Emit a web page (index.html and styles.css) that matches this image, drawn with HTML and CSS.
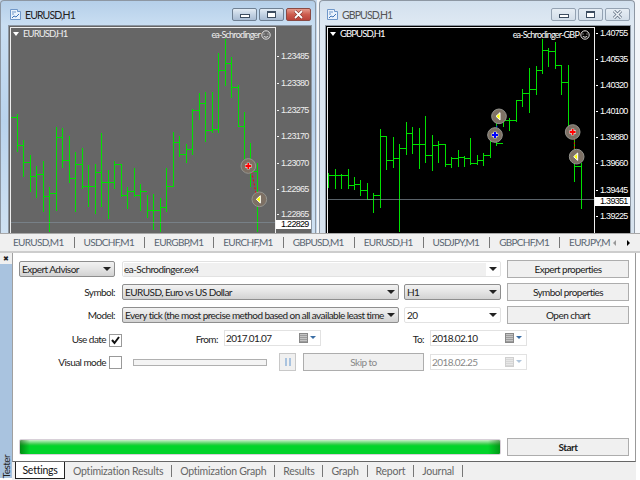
FILE: index.html
```html
<!DOCTYPE html>
<html lang="en">
<head>
    <meta charset="UTF-8">
    <title>Strategy Tester</title>
    <link rel="stylesheet" href="styles.css">
</head>
<body>
    <div class="desktop">
        <div class="charts">
            <!-- EURUSD window -->
            <div class="window window-left">
                <div class="titlebar">
                    <svg class="win-icon" width="13" height="13" viewBox="0 0 13 13"><path d="M1.5 1.5h7v2h3v8h-10z" fill="#e9f2fc" stroke="#6f97c9"/><path d="M3 4h4M3 6h2" stroke="#6f97c9"/><path d="M3 10l2-2 2 1 3-3" fill="none" stroke="#3f74b8"/></svg>
                    <span class="win-title">EURUSD,H1</span>
                    <div class="win-buttons">
                        <span class="win-btn"><i class="glyph-min"></i></span>
                        <span class="win-btn"><i class="glyph-max"></i></span>
                        <span class="win-btn btn-close">
                            <svg width="11" height="9" viewBox="0 0 11 9"><path d="M2 1l7 7M9 1l-7 7" stroke="#7a2c26" stroke-width="3"/><path d="M2 1l7 7M9 1l-7 7" stroke="#fff" stroke-width="1.8"/></svg>
                        </span>
                    </div>
                </div>
                <div class="chart chart-grey">
                    <div class="plot">
                        <span class="chart-name">EURUSD,H1</span>
                        <span class="ea-name">ea-Schrodinger
                            <svg class="smile" width="10" height="10" viewBox="0 0 10 10"><circle cx="5" cy="5" r="4.2"/><path d="M3 3.5v1M7 3.5v1M2.8 6.4q2.2 1.8 4.4 0"/></svg>
                        </span>
                        <svg class="bars" viewBox="33 84 792 615" width="264" height="205">
                            <path class="bar-line" d="M32 320V420M32 352H51M51 342V455M51 435H71M71 420V530M71 487H90M90 465V575M90 528H110M110 498V595M110 523H130M130 482V635M130 590H149M149 562V695M149 580H169M169 380V632M169 411H188M188 385V505M188 480H208M208 408V548M208 535H227M227 455V635M227 492H247M247 445V567M247 560H266M266 495V622M266 560H286M286 492V643M286 516H305M305 400V620M305 547H325M325 510V657M325 548H344M344 482V567M344 492H364M364 492V592M364 587H383M383 562V628M383 575H403M403 503V592M403 585H422M422 552V632M422 575H441M441 585V655M441 630H461M461 582V690M461 630H480M480 595V695M480 622H500M500 503V635M500 560H519M519 397V560M519 427H539M539 408V470M539 463H558M558 432V488M558 448H578M578 328V465M578 330H597M597 280V360M597 310H617M617 277V425M617 390H636M636 277V398M636 388H656M656 160V400M656 212H675M675 118V258M675 190H694M694 172V293M694 262H714M714 255V380M714 380H733M733 337V497M752 430V562M752 515H772M772 490V695"/>
                            <path class="ask-line" d="M33 668H828"/>
                            <path class="signal" d="M755 515L770 590"/>
                            <circle class="mark" cx="745" cy="498" r="22"/>
                            <path d="M745 488v20M735 498h20" stroke="#fff" stroke-width="9"/>
                            <path d="M745 489v18M736 498h18" stroke="#f00" stroke-width="6"/>
                            <circle class="mark" cx="778" cy="598" r="22"/>
                            <path class="arrow-left" d="M769 598l12-11v22z"/>
                        </svg>
                    </div>
                    <div class="axis">
                        <span class="price" style="top:23px">1.23485</span>
                        <span class="price" style="top:50px">1.23380</span>
                        <span class="price" style="top:77px">1.23275</span>
                        <span class="price" style="top:103px">1.23170</span>
                        <span class="price" style="top:130px">1.23070</span>
                        <span class="price" style="top:156px">1.22965</span>
                        <span class="price" style="top:181px">1.22865</span>
                        <span class="price price-now" style="top:193px">1.22829</span>
                    </div>
                </div>
            </div>

            <!-- GBPUSD window -->
            <div class="window window-right">
                <div class="titlebar">
                    <svg class="win-icon" width="13" height="13" viewBox="0 0 13 13"><path d="M1.5 1.5h7v2h3v8h-10z" fill="#e9f2fc" stroke="#6f97c9"/><path d="M3 4h4M3 6h2" stroke="#6f97c9"/><path d="M3 10l2-2 2 1 3-3" fill="none" stroke="#3f74b8"/></svg>
                    <span class="win-title win-title-off">GBPUSD,H1</span>
                    <div class="win-buttons">
                        <span class="win-btn btn-off-frame"><i class="glyph-min"></i></span>
                        <span class="win-btn btn-off-frame"><i class="glyph-max"></i></span>
                        <span class="win-btn btn-off-frame">
                            <svg width="11" height="9" viewBox="0 0 11 9"><path d="M2 1l7 7M9 1l-7 7" stroke="#5b6a7c" stroke-width="3"/><path d="M2 1l7 7M9 1l-7 7" stroke="#eef3f8" stroke-width="1.6"/></svg>
                        </span>
                    </div>
                </div>
                <div class="chart chart-black">
                    <div class="plot">
                        <span class="chart-name">GBPUSD,H1</span>
                        <span class="ea-name">ea-Schrodinger-GBP
                            <svg class="smile" width="10" height="10" viewBox="0 0 10 10"><circle cx="5" cy="5" r="4.2"/><path d="M3 3.5v1M7 3.5v1M2.8 6.4q2.2 1.8 4.4 0"/></svg>
                        </span>
                        <svg class="bars" viewBox="24 84 798 615" width="266" height="205">
                            <path class="bar-line" d="M25 518V565M25 525H45M45 508V567M45 527H64M64 522V567M64 527H84M84 508V567M84 555H103M103 530V570M103 553H122M122 540V587M122 572H142M142 548V600M142 598H161M161 580V640M161 587H181M181 387V623M181 410H200M200 408V510M200 482H219M219 412V505M219 476H239M239 432V695M239 445H258M258 365V465M258 400H278M278 380V462M278 433H297M297 385V507M297 433H316M316 348V490M316 465H336M336 405V512M336 436H355M355 422V490M355 434H375M375 432V502M375 492H394M394 472V505M394 476H414M414 450V500M414 472H433M433 468V500M433 475H452M452 415V495M452 490H472M472 465V495M472 482H491M491 458V497M491 465H511M511 405V475M511 425H530M530 355V438M530 430H549M549 345V382M549 362H569M569 355V392M569 360H589M589 300V365M589 302H608M608 268V320M608 280H628M628 203V338M628 268H648M648 198V285M648 212H667M667 118V222M667 150H686M686 145V200M686 155H706M706 125V208M706 196H725M725 195V285M725 246H745M745 195V385M764 375V545M764 500H784M784 490V628"/>
                            <path class="ask-line" d="M24 599H825"/>
                            <path class="signal signal-blue" d="M528 395L533 368"/>
                            <path class="signal" d="M763 415V450"/>
                            <circle class="mark" cx="537" cy="349" r="22"/>
                            <path class="arrow-left" d="M528 349l12-11v22z"/>
                            <circle class="mark" cx="525" cy="405" r="22"/>
                            <path d="M525 395v20M515 405h20" stroke="#fff" stroke-width="9"/>
                            <path d="M525 396v18M516 405h18" stroke="#00f" stroke-width="6"/>
                            <circle class="mark" cx="758" cy="396" r="22"/>
                            <path d="M758 386v20M748 396h20" stroke="#fff" stroke-width="9"/>
                            <path d="M758 387v18M749 396h18" stroke="#f00" stroke-width="6"/>
                            <circle class="mark" cx="770" cy="470" r="22"/>
                            <path class="arrow-left" d="M761 470l12-11v22z"/>
                        </svg>
                    </div>
                    <div class="axis">
                        <span class="price" style="top:0">1.40755</span>
                        <span class="price" style="top:26px">1.40535</span>
                        <span class="price" style="top:52px">1.40320</span>
                        <span class="price" style="top:78px">1.40100</span>
                        <span class="price" style="top:104px">1.39880</span>
                        <span class="price" style="top:130px">1.39660</span>
                        <span class="price" style="top:157px">1.39445</span>
                        <span class="price price-now" style="top:170px">1.39351</span>
                        <span class="price" style="top:183px">1.39225</span>
                    </div>
                </div>
            </div>
        </div>

        <div class="symbol-tabs">
            <span>EURUSD,M1</span>
            <span>USDCHF,M1</span>
            <span>EURGBP,M1</span>
            <span>EURCHF,M1</span>
            <span>GBPUSD,M1</span>
            <span>EURUSD,H1</span>
            <span>USDJPY,M1</span>
            <span>GBPCHF,M1</span>
            <span class="tab-cut">EURJPY,M</span>
            <div class="tab-arrows"><i class="arrow-prev"></i><i class="arrow-next"></i></div>
        </div>

        <div class="lower">
            <div class="side-strip">
                <span class="strip-close">&#10006;</span>
                <span class="strip-name">Tester</span>
            </div>
            <div class="lower-main">
                <div class="tester-main">
                    <div class="form">
                        <div class="row">
                            <div class="select select-grey select-type">Expert Advisor<i class="caret"></i></div>
                            <div class="select select-file"><span class="file-name">ea-Schrodinger.ex4</span><i class="caret"></i></div>
                            <button class="btn">Expert properties</button>
                        </div>
                        <div class="row">
                            <label class="row-label">Symbol:</label>
                            <div class="select select-grey select-wide">EURUSD, Euro vs US Dollar<i class="caret"></i></div>
                            <div class="select select-grey select-small">H1<i class="caret"></i></div>
                            <button class="btn">Symbol properties</button>
                        </div>
                        <div class="row">
                            <label class="row-label">Model:</label>
                            <div class="select select-grey select-wide"><span class="clip">Every tick (the most precise method based on all available least time</span><i class="caret"></i></div>
                            <div class="select select-small">20<i class="caret"></i></div>
                            <button class="btn">Open chart</button>
                        </div>
                        <div class="row row-use-date">
                            <label class="check-label">Use date</label>
                            <span class="check"><svg width="11" height="11" viewBox="0 0 11 11"><path d="M2 5l2.5 3L9 2" fill="none" stroke="#111" stroke-width="2"/></svg></span>
                            <label class="from-label">From:</label>
                            <div class="date">2017.01.07<i class="cal"></i><i class="caret-blue"></i></div>
                            <label class="to-label">To:</label>
                            <div class="date">2018.02.10<i class="cal"></i><i class="caret-blue"></i></div>
                        </div>
                        <div class="row">
                            <label class="check-label">Visual mode</label>
                            <span class="check"></span>
                            <div class="slider"></div>
                            <span class="pause"><i></i><i></i></span>
                            <button class="btn btn-off">Skip to</button>
                            <div class="date date-off">2018.02.25<i class="cal"></i><i class="caret-blue"></i></div>
                        </div>
                    </div>
                    <div class="run-row">
                        <div class="progress"></div>
                        <button class="btn btn-start">Start</button>
                    </div>
                </div>

                <div class="bottom-tabs">
                    <span class="tab-active">Settings</span>
                    <span>Optimization Results</span>
                    <span>Optimization Graph</span>
                    <span>Results</span>
                    <span>Graph</span>
                    <span>Report</span>
                    <span>Journal</span>
                </div>
            </div>
        </div>
    </div>
</body>
</html>
```

FILE: styles.css
```css
* {
    margin: 0;
    padding: 0;
    box-sizing: border-box;
}

body {
    font-family: Lato, "Liberation Sans", Arial, sans-serif;
    font-size: 10px;
    letter-spacing: -0.55px;
    color: #222;
    background-color: #fff;
    overflow: hidden;
}

.desktop {
    width: 640px;
    height: 480px;
    display: flex;
    flex-direction: column;
    background-color: #fff;
}

/* Chart windows */
.charts {
    display: flex;
    height: 233px;
    flex: none;
    gap: 3px;
    background: linear-gradient(90deg, #c5d8ec 317px, #f2f5f9 317px);
}

.window {
    width: 316px;
    height: 233px;
    display: flex;
    flex-direction: column;
    overflow: hidden;
    border: 1px solid #8d97a3;
    border-bottom: none;
    border-radius: 4px 4px 0 0;
}

.window-left {
    padding: 0 3px 0 7px;
    background: linear-gradient(#b5cfe9, #c9def2 24px, #b9d3ec 120px, #cfe1f2);
}

.window-right {
    padding: 0 3px 0 5px;
    background: linear-gradient(#d2e0ee, #dfe9f3 24px, #d6e2ee);
}

.titlebar {
    height: 24px;
    flex: none;
    display: flex;
    align-items: center;
    gap: 3px;
    padding: 3px 0 0 1px;
}

.win-title {
    font-size: 10.5px;
    letter-spacing: -0.9px;
}

.win-title-off {
    color: #555;
}

.win-buttons {
    margin-left: auto;
    display: flex;
    gap: 2px;
    padding-right: 1px;
}

.win-btn {
    width: 25px;
    height: 13px;
    display: flex;
    align-items: center;
    justify-content: center;
    border: 1px solid #6f8093;
    border-radius: 2px;
    background: linear-gradient(#e3ebf4, #c3d2e3 50%, #a9bcd3);
}

.btn-off-frame {
    border-color: #94a2b2;
    background: linear-gradient(#e6edf4, #d3dee9);
}

.btn-close {
    border-color: #8a4a44;
    background: linear-gradient(#e59a8c, #cd5c4e 50%, #b9433a);
}

.glyph-min {
    width: 10px;
    height: 4px;
    margin-top: 3px;
    background-color: #fff;
    border: 1px solid #3d4d60;
}

.glyph-max {
    width: 9px;
    height: 7px;
    background-color: #fff;
    border: 1px solid #3d4d60;
    border-top-width: 2px;
}

.chart {
    flex: 1;
    display: flex;
    border: 1px solid #8d97a3;
    border-bottom: none;
    padding: 1px 0 0 1px;
}

.chart-grey {
    background-color: #666;
    color: #eee;
}

.chart-black {
    background-color: #000;
    color: #fff;
}

.plot {
    flex: 1;
    position: relative;
    overflow: hidden;
    border: 1px solid #eee;
    border-bottom: none;
}

.chart-name {
    position: absolute;
    left: 12px;
    top: 0;
    font-size: 9.5px;
    letter-spacing: -0.9px;
    line-height: 12px;
}

.chart-name::before {
    content: "";
    position: absolute;
    left: -10px;
    top: 4px;
    border: 3px solid transparent;
    border-top: 4px solid #fff;
    border-bottom: none;
}

.ea-name {
    position: absolute;
    right: 4px;
    top: 1px;
    display: flex;
    align-items: center;
    gap: 1px;
    font-size: 9px;
    letter-spacing: -0.8px;
    line-height: 12px;
}

.smile {
    fill: none;
    stroke: currentColor;
    stroke-width: 0.9;
}

.bars {
    display: block;
}

.bar-line {
    fill: none;
    stroke: #00e000;
    stroke-width: 3;
    shape-rendering: crispEdges;
}

.signal {
    fill: none;
    stroke: #f00;
    stroke-width: 3;
    stroke-dasharray: 6 6;
}

.signal-blue {
    stroke: #00f;
}

.mark {
    fill: #7d7064;
    stroke: #94948e;
    stroke-width: 3;
}

.arrow-left {
    fill: #ff0;
    stroke: #fff;
    stroke-width: 3;
}

.ask-line {
    fill: none;
    stroke: #7f8c96;
    stroke-width: 3;
    opacity: 0.7;
    shape-rendering: crispEdges;
}

.axis {
    width: 35px;
    flex: none;
    position: relative;
}

.price {
    position: absolute;
    left: 5px;
    margin-top: 2px;
    font-family: "Liberation Sans", Arial, sans-serif;
    font-size: 9px;
    letter-spacing: -0.7px;
    line-height: 9px;
}

.price::before {
    content: "";
    position: absolute;
    left: -4px;
    top: 4px;
    width: 2px;
    height: 1px;
    background-color: currentColor;
}

.price-now {
    left: 0;
    width: 35px;
    height: 9px;
    margin-top: 0;
    padding-left: 5px;
    background-color: #fff;
    color: #000;
}

.price-now::before {
    display: none;
}

/* Symbol tabs */
.symbol-tabs {
    height: 20px;
    flex: none;
    display: flex;
    align-items: center;
    padding-left: 4px;
    overflow: hidden;
    letter-spacing: -0.7px;
    color: #5a6672;
    background-color: #f0f0f0;
    border-top: 1px solid #a8a8a8;
    border-bottom: 2px solid #cdcdcd;
}

.symbol-tabs > span {
    flex: none;
    padding: 0 10px 0 9px;
    white-space: nowrap;
    border-right: 1px solid #777;
    line-height: 11px;
}

.symbol-tabs > .tab-cut {
    width: 50px;
    padding-right: 0;
    border-right: none;
}

.tab-arrows {
    display: flex;
    align-items: center;
    gap: 11px;
    margin-left: 3px;
}

.arrow-prev {
    border: 3px solid transparent;
    border-right: 3px solid #999;
    border-left: none;
}

.arrow-next {
    border: 3px solid transparent;
    border-left: 3px solid #000;
    border-right: none;
}

/* Tester panel */
.lower {
    flex: 1;
    min-height: 0;
    display: flex;
}

.side-strip {
    width: 12px;
    flex: none;
    display: flex;
    flex-direction: column;
    justify-content: space-between;
    align-items: center;
    background: linear-gradient(#f0f0f0 11px, #a9c3df 11px);
    margin-bottom: 2px;
}

.strip-close {
    font-size: 7px;
    line-height: 10px;
}

.strip-name {
    writing-mode: vertical-rl;
    transform: rotate(180deg);
    line-height: 12px;
}

.lower-main {
    flex: 1;
    display: flex;
    flex-direction: column;
    margin-right: 4px;
}

.tester-main {
    flex: 1;
    display: flex;
    flex-direction: column;
    justify-content: space-between;
    padding: 7px 6px 5px 6px;
    background-color: #fff;
    border-left: 1px solid #a0a0a0;
    border-right: 1px solid #999;
    border-bottom: 1px solid #666;
}

.form {
    display: flex;
    flex-direction: column;
    gap: 5px;
}

.row {
    display: flex;
    align-items: center;
    height: 18px;
}

.row-use-date {
    align-items: flex-start;
    margin-top: 1px;
}

.row-label {
    width: 96px;
    margin-right: 7px;
    text-align: right;
    flex: none;
}

.check-label {
    width: 87px;
    margin-right: 3px;
    text-align: right;
    flex: none;
}

.row-use-date .check-label,
.row-use-date .from-label,
.row-use-date .to-label {
    line-height: 18px;
}

.select {
    height: 16px;
    position: relative;
    display: flex;
    align-items: center;
    padding-left: 2px;
    border: 1px solid #e2e2e2;
    border-radius: 2px;
    white-space: nowrap;
    flex: none;
}

.select-grey {
    border: 1px solid #8e8e8e;
    background: linear-gradient(#f2f2f2, #e4e4e4 50%, #d2d2d2);
}

.select-type {
    width: 96px;
    margin-right: 7px;
}

.select-file {
    width: 379px;
    padding-left: 1px;
}

.file-name {
    width: 362px;
    line-height: 13px;
    background-color: #f0f0f0;
}

.select-wide {
    width: 277px;
}

.select-small {
    width: 97px;
    margin-left: 5px;
}

.clip {
    width: 262px;
    overflow: hidden;
}

.caret {
    position: absolute;
    right: 3px;
    top: 5px;
    border: 4px solid transparent;
    border-top: 4px solid #222;
    border-bottom: none;
}

.btn {
    width: 122px;
    height: 18px;
    flex: none;
    margin-left: auto;
    font: inherit;
    letter-spacing: inherit;
    color: #222;
    background-color: #f0f0f0;
    border: 1px solid #adadad;
}

.check {
    width: 13px;
    height: 13px;
    flex: none;
    display: flex;
    align-items: center;
    justify-content: center;
    border: 1px solid #999;
}

.row-use-date .check {
    margin-top: 4px;
}

.from-label {
    width: 96px;
    margin-right: 6px;
    text-align: right;
    flex: none;
}

.to-label {
    width: 103px;
    margin-right: 6px;
    text-align: right;
    flex: none;
}

.date {
    width: 97px;
    height: 16px;
    flex: none;
    position: relative;
    padding-left: 1px;
    line-height: 14px;
    border: 1px solid #e2e2e2;
}

.date-off {
    color: #888;
    margin-left: 6px;
}

.cal {
    position: absolute;
    right: 12px;
    top: 2px;
    width: 9px;
    height: 10px;
    background: repeating-linear-gradient(#c4c4c4 0 1px, #9c9c9c 1px 2px);
    border: 1px solid #888;
}

.caret-blue {
    position: absolute;
    right: 4px;
    top: 5px;
    border: 3px solid transparent;
    border-top: 3px solid #3a6ea5;
    border-bottom: none;
}

.date-off .cal,
.date-off .caret-blue {
    opacity: 0.4;
}

.slider {
    width: 134px;
    height: 7px;
    flex: none;
    margin-left: 11px;
    border: 1px solid #b0b0b0;
    background-color: #f4f4f4;
}

.pause {
    width: 17px;
    height: 18px;
    flex: none;
    margin-left: 12px;
    display: flex;
    align-items: center;
    justify-content: center;
    gap: 2px;
    border: 1px solid #c8c8c8;
    background-color: #f0f0f0;
}

.pause i {
    width: 2px;
    height: 8px;
    background-color: #a9c3df;
}

.btn-off {
    width: 121px;
    margin-left: 7px;
    color: #888;
}

.run-row {
    display: flex;
    align-items: center;
    gap: 6px;
}

.progress {
    flex: 1;
    height: 16px;
    border: 1px solid #d8d0d8;
    border-radius: 2px;
    background:
        linear-gradient(90deg, rgba(0, 80, 0, 0.55), transparent 10px, transparent calc(100% - 12px), rgba(0, 80, 0, 0.45)),
        linear-gradient(#c9f0c9, #36cf4a 30%, #02d42a 42%, #02d42a);
}

.btn-start {
    margin-left: 0;
    font-weight: bold;
}

/* Bottom tabs */
.bottom-tabs {
    height: 18px;
    flex: none;
    display: flex;
    align-items: flex-start;
    padding: 3px 0 0 3px;
    font-size: 10.5px;
    letter-spacing: -0.25px;
    color: #666;
    background-color: #f0f0f0;
}

.bottom-tabs span {
    padding: 0 8px;
    line-height: 12px;
    border-right: 1px solid #777;
}

.bottom-tabs .tab-active {
    width: 50px;
    height: 17px;
    margin-top: -3px;
    padding: 2px 0 0;
    text-align: center;
    line-height: 13px;
    color: #111;
    background-color: #fff;
    border: 1px solid #222;
    border-top: none;
}
```
